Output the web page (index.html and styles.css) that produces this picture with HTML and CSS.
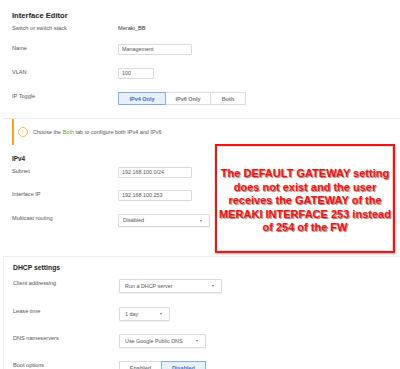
FILE: index.html
```html
<!DOCTYPE html>
<html lang="en">
<head>
  <meta charset="UTF-8">
  <meta name="viewport" content="width=device-width, initial-scale=1.0">
  <title>Interface Editor</title>
  <link rel="stylesheet" href="styles.css">
</head>
<body>
  <div class="page">
    <!-- Interface -->
    <section class="block editor">
      <h1>Interface Editor</h1>
      <div class="row info">
        <span class="label">Switch or switch stack</span>
        <span class="value">Meraki_BB</span>
      </div>
      <div class="row">
        <span class="label">Name</span>
        <div class="field w74">Management</div>
      </div>
      <div class="row">
        <span class="label">VLAN</span>
        <div class="field w36">100</div>
      </div>
      <div class="row">
        <span class="label">IP Toggle</span>
        <div class="toggle">
          <span class="opt on w48">IPv4 Only</span>
          <span class="opt w45">IPv6 Only</span>
          <span class="opt w35">Both</span>
        </div>
      </div>
    </section>

    <!-- Notice -->
    <div class="notice">
      <span class="notice-icon">!</span>
      <span>Choose the <em>Both</em> tab to configure both IPv4 and IPv6</span>
    </div>

    <!-- IPv4 -->
    <section class="block ipv4">
      <h2>IPv4</h2>
      <div class="row first">
        <span class="label">Subnet</span>
        <div class="field w74">192.168.100.0/24</div>
      </div>
      <div class="row gap12">
        <span class="label">Interface IP</span>
        <div class="field w74">192.168.100.253</div>
      </div>
      <div class="row">
        <span class="label">Multicast routing</span>
        <div class="select w92">Disabled</div>
      </div>
    </section>

    <!-- DHCP -->
    <section class="block dhcp">
      <h3>DHCP settings</h3>
      <div class="row first">
        <span class="label">Client addressing</span>
        <div class="select w103">Run a DHCP server</div>
      </div>
      <div class="row gap14">
        <span class="label">Lease time</span>
        <div class="select w51">1 day</div>
      </div>
      <div class="row">
        <span class="label">DNS nameservers</span>
        <div class="select w87">Use Google Public DNS</div>
      </div>
      <div class="row">
        <span class="label">Boot options</span>
        <div class="toggle tall">
          <span class="opt w43">Enabled</span>
          <span class="opt on w44">Disabled</span>
        </div>
      </div>
    </section>

    <!-- Annotation -->
    <div class="callout">
      <p>The DEFAULT GATEWAY setting does not exist and the user receives the GATEWAY of the MERAKI INTERFACE 253 instead of 254 of the FW</p>
    </div>
  </div>
</body>
</html>
```

FILE: styles.css
```css
body {
  margin: 0;
  padding: 0;
  background: #fff;
  font-family: 'Liberation Sans', Arial, sans-serif;
  color: #444;
  overflow: hidden;
}

.page {
  position: relative;
  width: 400px;
  height: 369px;
  padding-left: 3px;
  box-sizing: border-box;
}

.block {
  padding-left: 9px;
}

h1, h2, h3 {
  margin: 0;
  color: #222;
  font-weight: bold;
}

h1 {
  font-size: 7.6px;
  line-height: 11px;
}

h2 {
  font-size: 6.4px;
  line-height: 10px;
}

h3 {
  font-size: 6.8px;
  line-height: 10px;
}

.editor {
  padding-top: 10px;
  padding-bottom: 13px;
  border-bottom: 1px solid #ececec;
}

.ipv4 {
  padding-top: 9px;
  padding-bottom: 29px;
  border-bottom: 1px solid #ececec;
}

.dhcp {
  padding-top: 6px;
  border-left: 1px solid #f3f3f3;
  height: 120px;
}

/* Form rows */
.row {
  display: grid;
  grid-template-columns: 106px auto;
  align-items: start;
  margin-top: 13px;
}

.row.info { margin-top: 3px; }
.editor .row.info + .row { margin-top: 12px; }
.row.first { margin-top: 3px; }
.dhcp .row.first { margin-top: 6px; }
.row.gap12 { margin-top: 12px; }
.row.gap14 { margin-top: 14px; }

.label {
  font-size: 5.6px;
  line-height: 8px;
  color: #555;
}

.value {
  font-size: 5.6px;
  line-height: 8px;
  color: #333;
}

.field,
.select {
  box-sizing: border-box;
  height: 11px;
  border: 1px solid #dadada;
  border-radius: 1px;
  font-size: 5.4px;
  line-height: 9px;
  padding-left: 3px;
  color: #555;
}

.select {
  position: relative;
  height: 13px;
  line-height: 11px;
  padding-left: 4px;
  box-shadow: 0 1px 1px rgba(0, 0, 0, 0.06);
}

.dhcp .select {
  height: 14px;
  line-height: 12px;
  padding-left: 5px;
}

.select::after {
  content: '';
  position: absolute;
  right: 7px;
  top: 50%;
  margin-top: -1px;
  border-left: 1.5px solid transparent;
  border-right: 1.5px solid transparent;
  border-top: 2px solid #777;
}

/* Toggles */
.toggle {
  display: flex;
  height: 13px;
}

.toggle.tall { height: 14px; }

.opt {
  box-sizing: border-box;
  display: flex;
  align-items: center;
  justify-content: center;
  border: 1px solid #dcdcdc;
  margin-left: -1px;
  font-size: 5.5px;
  font-weight: bold;
  color: #777;
  background: #fff;
}

.opt:first-child { margin-left: 0; }

.opt.on {
  position: relative;
  border-color: #82aeea;
  background: #e8f0fc;
  color: #3d6fc2;
}

/* Notice */
.notice {
  display: flex;
  align-items: center;
  margin-left: 9px;
  height: 26px;
  border-left: 2px solid #f5a623;
  padding-left: 4px;
  font-size: 5.5px;
  color: #555;
}

.notice em {
  font-style: normal;
  color: #5aa02c;
}

.notice-icon {
  box-sizing: border-box;
  width: 10px;
  height: 10px;
  margin-right: 5px;
  border: 1px solid #f3b75a;
  border-radius: 50%;
  display: flex;
  align-items: center;
  justify-content: center;
  font-size: 5px;
  color: #f0a53a;
}

/* Widths */
.w35 { width: 36px; }
.w36 { width: 36px; }
.w43 { width: 43px; }
.w44 { width: 45px; }
.w45 { width: 46px; }
.w48 { width: 48px; }
.w51 { width: 51px; }
.w74 { width: 74px; }
.w87 { width: 87px; }
.w92 { width: 92px; }
.w103 { width: 103px; }

/* Red annotation box */
.callout {
  position: absolute;
  left: 215px;
  top: 144px;
  width: 180px;
  height: 109px;
  box-sizing: border-box;
  border: 2px solid #ee1515;
  background: #fff;
  box-shadow: 1px 1px 2px rgba(0, 0, 0, 0.35), inset 0 0 0 1px #e4e4e4;
  display: flex;
  align-items: center;
  justify-content: center;
  padding-top: 5px;
}

.callout p {
  margin: 0;
  text-align: center;
  font-size: 11px;
  line-height: 13.5px;
  font-weight: bold;
  color: #f01212;
  text-shadow: 1px 1px 1px rgba(90, 0, 0, 0.55);
}
```
